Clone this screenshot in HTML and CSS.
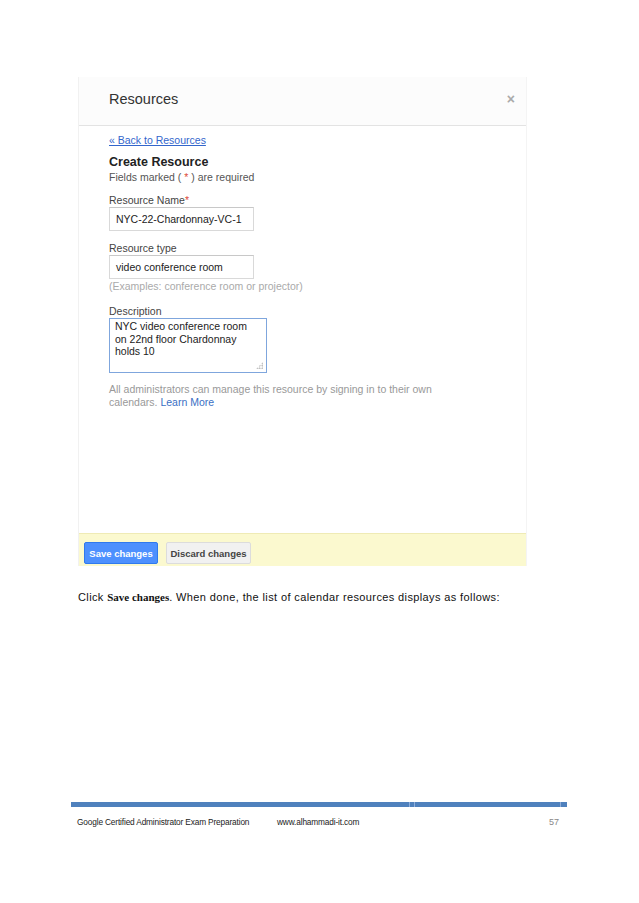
FILE: index.html
```html
<!DOCTYPE html>
<html lang="en">

<head>
    <meta charset="UTF-8">
    <meta name="viewport" content="width=device-width, initial-scale=1.0">
    <title>Create Resource</title>
    <link rel="stylesheet" href="styles.css">
</head>

<body>
    <div class="page">
        <div class="panel">
            <div class="panel-head">
                <span class="panel-title">Resources</span>
                <span class="close">&times;</span>
            </div>
            <div class="panel-body">
                <a class="back" href="#">&laquo; Back to Resources</a>
                <div class="form-title">Create Resource</div>
                <div class="hint">Fields marked ( <span class="req">*</span> ) are required</div>

                <div class="label label-first">Resource Name<span class="req">*</span></div>
                <div class="input">NYC-22-Chardonnay-VC-1</div>

                <div class="label">Resource type</div>
                <div class="input">video conference room</div>
                <div class="muted">(Examples: conference room or projector)</div>

                <div class="label label-desc">Description</div>
                <div class="textarea">
                    NYC video conference room<br>
                    on 22nd floor Chardonnay<br>
                    holds 10
                    <span class="grip"></span>
                </div>

                <p class="note">All administrators can manage this resource by signing in to their own<br>
                    calendars. <a href="#">Learn More</a></p>
            </div>
            <div class="actions">
                <button class="btn btn-save">Save changes</button>
                <button class="btn btn-discard">Discard changes</button>
            </div>
        </div>

        <p class="caption">Click <b>Save changes</b>. When done, the list of calendar resources displays as follows:</p>

        <div class="footer">
            <div class="footer-bar">
                <span class="tick tick-a"></span>
                <span class="tick tick-b"></span>
                <span class="tick tick-c"></span>
            </div>
            <div class="footer-text">
                <span class="footer-title">Google Certified Administrator Exam Preparation</span>
                <span class="footer-url">www.alhammadi-it.com</span>
                <span class="footer-num">57</span>
            </div>
        </div>
    </div>
</body>

</html>
```

FILE: styles.css
```css
body {
    margin: 0;
    background: #fff;
    font-family: "Liberation Sans", Arial, sans-serif;
    color: #333;
}

.page {
    width: 639px;
    height: 903px;
    padding-top: 77px;
    box-sizing: border-box;
}

/* screenshot of the dialog */
.panel {
    margin-left: 78px;
    width: 449px;
    height: 489px;
    box-sizing: border-box;
    border-left: 1px solid #f1f1f1;
    border-right: 1px solid #f4f4f4;
    display: flex;
    flex-direction: column;
}

.panel-head {
    height: 49px;
    box-sizing: border-box;
    border-bottom: 1px solid #e3e3e3;
    background: #fcfcfc;
    display: flex;
    align-items: center;
    justify-content: space-between;
    padding: 0 11px 4px 30px;
}

.panel-title {
    font-size: 14.5px;
    color: #333;
}

.close {
    font-size: 14px;
    color: #aaa;
    font-weight: bold;
}

.panel-body {
    padding-left: 30px;
    display: flex;
    flex-direction: column;
    align-items: flex-start;
    font-size: 10.5px;
}

.back {
    margin-top: 7px;
    line-height: 14px;
    color: #3366cc;
    text-decoration: underline;
}

.form-title {
    margin-top: 7px;
    line-height: 16px;
    font-size: 12.5px;
    font-weight: bold;
    color: #222;
}

.hint {
    line-height: 14px;
    color: #555;
}

.req {
    color: #dd4b39;
}

.label {
    margin-top: 10px;
    line-height: 14px;
    color: #444;
}

.label-first {
    margin-top: 9px;
}

.label-desc {
    margin-top: 11px;
}

.input {
    width: 145px;
    height: 24px;
    box-sizing: border-box;
    border: 1px solid #d9d9d9;
    border-top-color: #c8c8c8;
    padding-left: 6px;
    line-height: 22px;
    color: #222;
}

.muted {
    line-height: 14px;
    color: #aaa;
}

.textarea {
    position: relative;
    width: 158px;
    height: 55px;
    box-sizing: border-box;
    border: 1px solid #7fa6dd;
    padding: 1px 0 0 5px;
    line-height: 12.5px;
    color: #222;
}

.grip {
    position: absolute;
    right: 3px;
    bottom: 3px;
    width: 7px;
    height: 7px;
    background:
        radial-gradient(circle, #aaa 0.7px, transparent 1px) 0 0 / 2.5px 2.5px;
    clip-path: polygon(100% 0, 100% 100%, 0 100%);
}

.note {
    margin: 10px 0 0;
    line-height: 13px;
    color: #999;
}

.note a {
    color: #3a6fc4;
    text-decoration: none;
}

.actions {
    margin-top: auto;
    height: 33px;
    box-sizing: border-box;
    background: #fbf9cf;
    border-top: 1px solid #efebb5;
    display: flex;
    align-items: flex-end;
    gap: 8px;
    padding: 0 0 2px 5px;
}

.btn {
    height: 22px;
    border-radius: 2px;
    font-family: "Liberation Sans", Arial, sans-serif;
    font-size: 9.5px;
    font-weight: bold;
    padding: 0;
    cursor: pointer;
}

.btn-save {
    width: 74px;
    background: #4d90fe;
    border: 1px solid #3079ed;
    color: #fff;
}

.btn-discard {
    width: 85px;
    background: #f1f1f1;
    border: 1px solid #dcdcdc;
    color: #444;
}

/* document text */
.caption {
    margin: 24px 0 0 78px;
    line-height: 14px;
    font-size: 11px;
    letter-spacing: 0.38px;
    color: #111;
}

.caption b {
    font-family: "Liberation Serif", "Times New Roman", serif;
    font-size: 11px;
    letter-spacing: 0;
}

.footer {
    margin: 198px 0 0 71px;
    width: 496px;
}

.footer-bar {
    position: relative;
    height: 5px;
    background: #4f81bd;
}

.tick {
    position: absolute;
    top: 0;
    width: 1px;
    height: 5px;
    background: #8eaedb;
}

.tick-a { left: 338px; }
.tick-b { left: 343px; }
.tick-c { left: 489px; }

.footer-text {
    margin-top: 9px;
    line-height: 12px;
    display: flex;
    padding: 0 8px 0 6px;
    font-size: 8.3px;
    letter-spacing: -0.15px;
    color: #222;
}

.footer-title {
    width: 200px;
}

.footer-num {
    margin-left: auto;
    font-size: 9px;
    letter-spacing: 0;
    color: #888;
}
```
